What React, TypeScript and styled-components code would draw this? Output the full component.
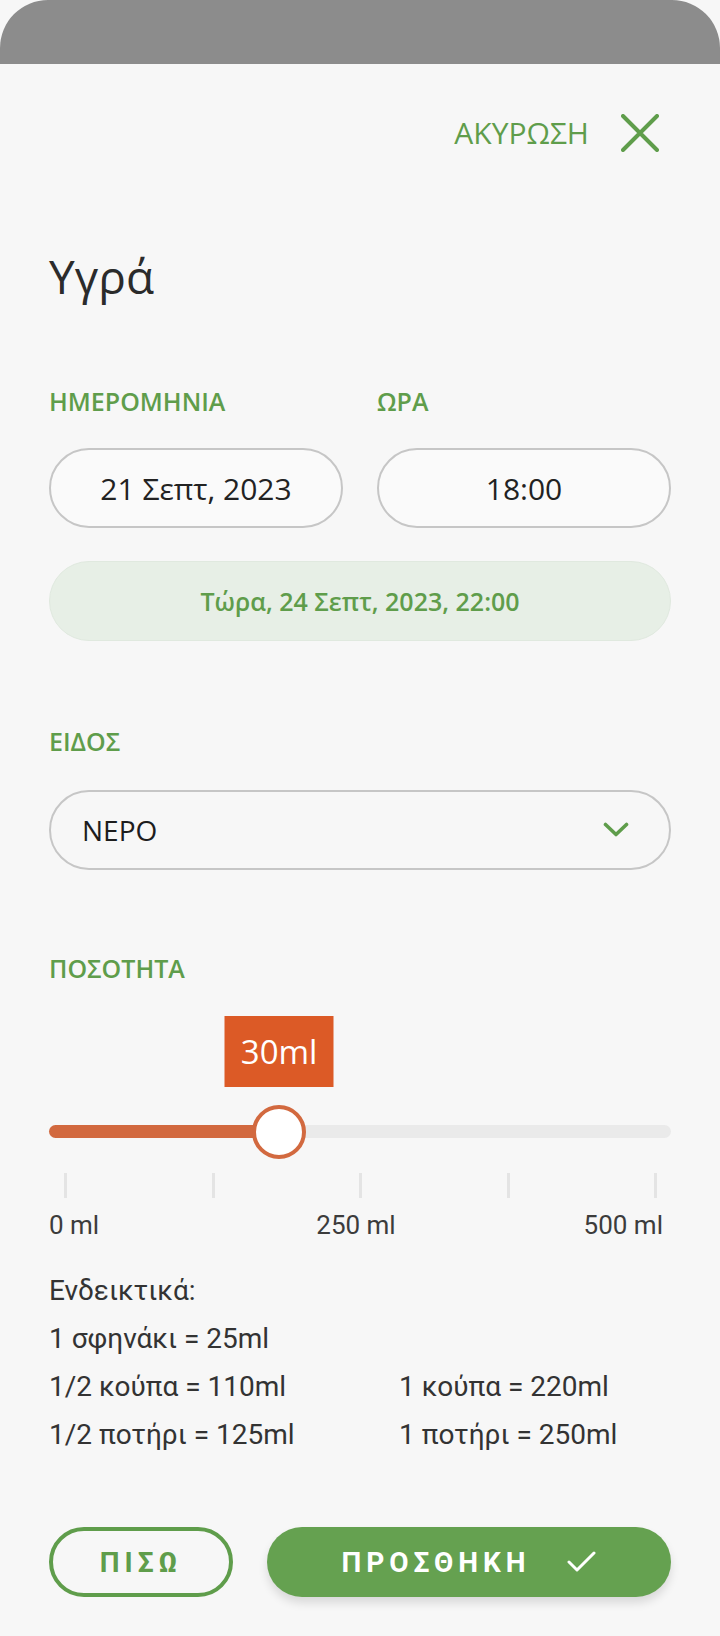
import styled, { createGlobalStyle } from "styled-components";

const GREEN = "#5f9d4b";
const ORANGE = "#dc5a26";

const GlobalStyle = createGlobalStyle`
  html, body {
    margin: 0;
    padding: 0;
    background: #f7f7f7;
  }
  * {
    box-sizing: border-box;
  }
`;

const MIN = 0;
const MAX = 500;
const VALUE = 30;

const recipes = [
  ["Ενδεικτικά:", ""],
  ["1 σφηνάκι = 25ml", ""],
  ["1/2 κούπα = 110ml", "1 κούπα = 220ml"],
  ["1/2 ποτήρι = 125ml", "1 ποτήρι = 250ml"],
];

const CloseIcon = () => (
  <svg width="38" height="38" viewBox="0 0 38 38">
    <path
      d="M2 2 L36 36 M36 2 L2 36"
      stroke={GREEN}
      strokeWidth="4"
      strokeLinecap="round"
      fill="none"
    />
  </svg>
);

const Chevron = () => (
  <svg width="26" height="16" viewBox="0 0 26 16">
    <path
      d="M2.5 2.5 L13 12.5 L23.5 2.5"
      stroke={GREEN}
      strokeWidth="3.6"
      strokeLinecap="round"
      strokeLinejoin="round"
      fill="none"
    />
  </svg>
);

const Check = () => (
  <svg width="30" height="24" viewBox="0 0 30 24">
    <path
      d="M2 12 L10 20 L27 3"
      stroke="#fff"
      strokeWidth="3"
      strokeLinecap="round"
      strokeLinejoin="round"
      fill="none"
    />
  </svg>
);

const App = () => {
  // where the thumb sits on the track in the reference
  const percent = 37;

  return (
    <>
      <GlobalStyle />
      <Page>
        <Backdrop />
        <Sheet>
          <TopBar>
            <CancelButton>
              ΑΚΥΡΩΣΗ
              <CloseIcon />
            </CancelButton>
          </TopBar>

          <Title>Υγρά</Title>

          <TwoCols>
            <Field>
              <Label>ΗΜΕΡΟΜΗΝΙΑ</Label>
              <PillInput>21 Σεπτ, 2023</PillInput>
            </Field>
            <Field>
              <Label>ΩΡΑ</Label>
              <PillInput>18:00</PillInput>
            </Field>
          </TwoCols>

          <NowPill>Τώρα, 24 Σεπτ, 2023, 22:00</NowPill>

          <Field $top={83}>
            <Label>ΕΙΔΟΣ</Label>
            <Select>
              <span>ΝΕΡΟ</span>
              <Chevron />
            </Select>
          </Field>

          <Field $top={81}>
            <Label>ΠΟΣΟΤΗΤΑ</Label>
            <SliderArea aria-valuemin={MIN} aria-valuemax={MAX} aria-valuenow={VALUE}>
              <Track>
                <Fill style={{ width: `${percent}%` }} />
                <Thumb style={{ left: `${percent}%` }}>
                  <Bubble>{VALUE}ml</Bubble>
                </Thumb>
              </Track>
              <Ticks>
                {[0, 1, 2, 3, 4].map((i) => (
                  <Tick key={i} />
                ))}
              </Ticks>
              <Scale>
                <ScaleLabel $align="start">0 ml</ScaleLabel>
                <ScaleLabel $align="center">250 ml</ScaleLabel>
                <ScaleLabel $align="end">500 ml</ScaleLabel>
              </Scale>
            </SliderArea>
          </Field>

          <Hints>
            {recipes.map(([a, b], i) => (
              <HintRow key={i}>
                <span>{a}</span>
                <span>{b}</span>
              </HintRow>
            ))}
          </Hints>

          <Actions>
            <BackButton>ΠΙΣΩ</BackButton>
            <AddButton>
              ΠΡΟΣΘΗΚΗ
              <Check />
            </AddButton>
          </Actions>
        </Sheet>
      </Page>
    </>
  );
};

const Page = styled.div`
  width: 720px;
  min-height: 1636px;
  background: #f7f7f7;
  display: flex;
  flex-direction: column;
`;

const Backdrop = styled.div`
  height: 64px;
  background: #8c8c8c;
  border-radius: 48px 48px 0 0;
`;

const Sheet = styled.div`
  display: flex;
  flex-direction: column;
  padding: 0 49px;
  font-family: "Open Sans", "Noto Sans", sans-serif;
`;

const TopBar = styled.div`
  display: flex;
  justify-content: flex-end;
  padding-top: 50px;
  padding-right: 12px;
`;

const CancelButton = styled.div`
  display: flex;
  align-items: center;
  gap: 32px;
  color: ${GREEN};
  font-size: 30px;
  font-weight: 400;
  line-height: 38px;
`;

const Title = styled.h1`
  margin: 96px 0 0;
  font-size: 46px;
  font-weight: 400;
  line-height: 56px;
  color: #2b2b2b;
`;

const TwoCols = styled.div`
  display: grid;
  grid-template-columns: 1fr 1fr;
  column-gap: 34px;
  margin-top: 80px;
`;

const Field = styled.div<{ $top?: number }>`
  display: flex;
  flex-direction: column;
  margin-top: ${(p) => p.$top ?? 0}px;
`;

const Label = styled.div`
  color: ${GREEN};
  font-size: 25px;
  font-weight: 600;
  line-height: 34px;
  margin-bottom: 30px;
`;

const PillInput = styled.div`
  height: 80px;
  border: 2px solid #c6c6c6;
  border-radius: 40px;
  background: #fafafa;
  display: flex;
  align-items: center;
  justify-content: center;
  font-size: 30px;
  color: #222;
`;

const NowPill = styled.div`
  margin-top: 33px;
  height: 80px;
  border-radius: 40px;
  background: #e7efe6;
  border: 1px solid #e0e9df;
  display: flex;
  align-items: center;
  justify-content: center;
  color: ${GREEN};
  font-size: 25px;
  font-weight: 600;
`;

const Select = styled.div`
  margin-top: 2px;
  height: 80px;
  border: 2px solid #c6c6c6;
  border-radius: 40px;
  display: flex;
  align-items: center;
  justify-content: space-between;
  padding: 0 40px 0 31px;
  font-size: 28px;
  color: #1d1d1d;
`;

const SliderArea = styled.div`
  display: flex;
  flex-direction: column;
  padding-top: 110px;
`;

const Track = styled.div`
  position: relative;
  height: 13px;
  border-radius: 7px;
  background: #eaeaea;
`;

const Fill = styled.div`
  height: 100%;
  border-radius: 7px 0 0 7px;
  background: #d2693f;
`;

const Thumb = styled.div`
  position: absolute;
  top: 50%;
  width: 54px;
  height: 54px;
  margin: -27px 0 0 -27px;
  border-radius: 50%;
  background: #fff;
  border: 4px solid #d2693f;
`;

const Bubble = styled.div`
  position: absolute;
  bottom: 68px;
  left: 50%;
  transform: translateX(-50%);
  width: 109px;
  height: 71px;
  background: ${ORANGE};
  color: #fff;
  font-size: 33px;
  font-weight: 400;
  display: flex;
  align-items: center;
  justify-content: center;
`;

const Ticks = styled.div`
  display: flex;
  justify-content: space-between;
  padding: 0 14px 0 15px;
  margin-top: 35px;
`;

const Tick = styled.div`
  width: 3px;
  height: 25px;
  background: #e4e4e4;
`;

const Scale = styled.div`
  display: grid;
  grid-template-columns: 1fr auto 1fr;
  padding-right: 8px;
  margin-top: 10px;
  font-family: Roboto, "Noto Sans", sans-serif;
  font-size: 26px;
  line-height: 34px;
  color: #3c3c3c;
`;

const ScaleLabel = styled.span<{ $align: "start" | "center" | "end" }>`
  justify-self: ${(p) => p.$align};
`;

const Hints = styled.div`
  margin-top: 25px;
  display: flex;
  flex-direction: column;
  font-family: Roboto, "Noto Sans", sans-serif;
  font-size: 28px;
  line-height: 48px;
  color: #333;
`;

const HintRow = styled.div`
  display: grid;
  grid-template-columns: 350px 1fr;
`;

const Actions = styled.div`
  display: flex;
  gap: 34px;
  margin-top: 68px;
  font-family: Roboto, "Noto Sans", sans-serif;
`;

const BackButton = styled.div`
  width: 184px;
  height: 70px;
  border: 4px solid ${GREEN};
  border-radius: 35px;
  display: flex;
  align-items: center;
  justify-content: center;
  color: ${GREEN};
  font-size: 28px;
  font-weight: 700;
  letter-spacing: 5px;
`;

const AddButton = styled.div`
  flex: 1;
  height: 70px;
  border-radius: 35px;
  background: #65a150;
  box-shadow: 0 6px 10px rgba(0, 0, 0, 0.12);
  display: flex;
  align-items: center;
  justify-content: center;
  gap: 36px;
  color: #fff;
  font-size: 28px;
  font-weight: 700;
  letter-spacing: 5px;
`;

export default App;
